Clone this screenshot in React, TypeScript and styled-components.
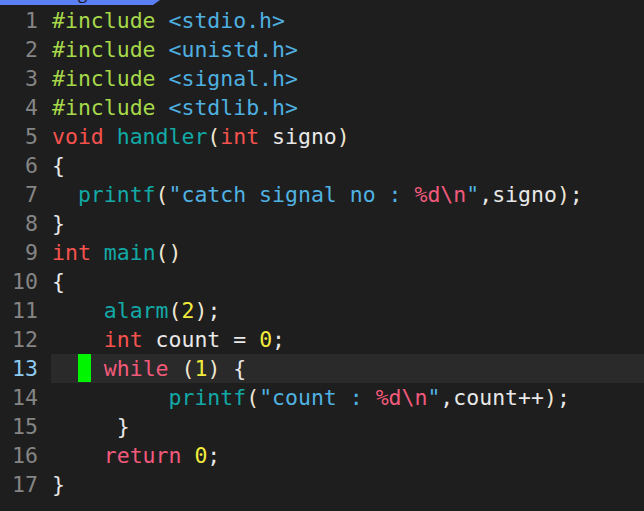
import React from "react";
import styled, { createGlobalStyle } from "styled-components";

const Global = createGlobalStyle`
  html, body { margin: 0; padding: 0; background: #1e1e1e; }
  body { width: 644px; height: 511px; overflow: hidden; }
`;

const Page = styled.div`
  width: 644px;
  height: 511px;
  background: #1e1e1e;
  display: flex;
  flex-direction: column;
  font-family: "DejaVu Sans Mono", "Liberation Mono", monospace;
`;

const TopStrip = styled.div`
  height: 6px;
  display: flex;
`;

const Tab = styled.div`
  width: 160px;
  height: 5px;
  background: #5b80f6;
  clip-path: polygon(0 0, 100% 0, 153px 100%, 0 100%);
  overflow: hidden;
  display: flex;
`;

const TabLabel = styled.span`
  margin-left: 78px;
  margin-top: -17px;
  font-family: "Open Sans", "DejaVu Sans", sans-serif;
  font-size: 17px;
  line-height: 20px;
  color: #1a1a1a;
`;

const Editor = styled.div`
  display: flex;
  flex-direction: column;
`;

const Row = styled.div`
  display: flex;
  height: 29px;
  font-size: 21.5px;
  line-height: 29px;
  white-space: pre;
`;

const LineNo = styled.div<{ $active?: boolean }>`
  width: 38px;
  text-align: right;
  color: ${(p) => (p.$active ? "#8ecbf0" : "#858585")};
`;

const Code = styled.div<{ $active?: boolean }>`
  flex: 1;
  margin-left: 13px;
  padding-left: 1px;
  background: ${(p) => (p.$active ? "#2a2a2a" : "transparent")};
  color: #e8e8e8;
`;

const Block = styled.span`
  display: inline-block;
  width: 13px;
  height: 28px;
  vertical-align: top;
  background: #00f500;
`;

const kinds = {
  pre: "#a6d84a",
  inc: "#4fb0e0",
  kw: "#f5524e",
  kw2: "#f25a7c",
  fn: "#12a9a6",
  str: "#50b2e2",
  esc: "#f25a7c",
  num: "#f2ec3c",
  par: "#efe6d2",
  txt: "#e8e8e8",
};

type Kind = keyof typeof kinds;

const Tok = styled.span<{ $k: Kind }>`
  color: ${(p) => kinds[p.$k]};
`;

type Seg = [Kind, string] | "BLOCK";

const lines: Seg[][] = [
  [["pre", "#include"], ["txt", " "], ["inc", "<stdio.h>"]],
  [["pre", "#include"], ["txt", " "], ["inc", "<unistd.h>"]],
  [["pre", "#include"], ["txt", " "], ["inc", "<signal.h>"]],
  [["pre", "#include"], ["txt", " "], ["inc", "<stdlib.h>"]],
  [["kw", "void"], ["txt", " "], ["fn", "handler"], ["par", "("], ["kw", "int"], ["txt", " signo"], ["par", ")"]],
  [["txt", "{"]],
  [["txt", "  "], ["fn", "printf"], ["par", "("], ["str", "\"catch signal no : "], ["esc", "%d\\n"], ["str", "\""], ["txt", ",signo"], ["par", ")"], ["txt", ";"]],
  [["txt", "}"]],
  [["kw", "int"], ["txt", " "], ["fn", "main"], ["par", "()"]],
  [["txt", "{"]],
  [["txt", "    "], ["fn", "alarm"], ["par", "("], ["num", "2"], ["par", ")"], ["txt", ";"]],
  [["txt", "    "], ["kw", "int"], ["txt", " count = "], ["num", "0"], ["txt", ";"]],
  [["txt", "  "], "BLOCK", ["txt", " "], ["kw2", "while"], ["txt", " "], ["par", "("], ["num", "1"], ["par", ")"], ["txt", " {"]],
  [["txt", "         "], ["fn", "printf"], ["par", "("], ["str", "\"count : "], ["esc", "%d\\n"], ["str", "\""], ["txt", ",count++"], ["par", ")"], ["txt", ";"]],
  [["txt", "     }"]],
  [["txt", "    "], ["kw2", "return"], ["txt", " "], ["num", "0"], ["txt", ";"]],
  [["txt", "}"]],
];

const ACTIVE = 13;

export default function App() {
  return (
    <Page>
      <Global />
      <TopStrip>
        <Tab>
          <TabLabel>g</TabLabel>
        </Tab>
      </TopStrip>
      <Editor>
        {lines.map((segs, i) => {
          const n = i + 1;
          const active = n === ACTIVE;
          return (
            <Row key={n}>
              <LineNo $active={active}>{n}</LineNo>
              <Code $active={active}>
                {segs.map((s, j) =>
                  s === "BLOCK" ? (
                    <Block key={j} />
                  ) : (
                    <Tok key={j} $k={s[0]}>
                      {s[1]}
                    </Tok>
                  )
                )}
              </Code>
            </Row>
          );
        })}
      </Editor>
    </Page>
  );
}
